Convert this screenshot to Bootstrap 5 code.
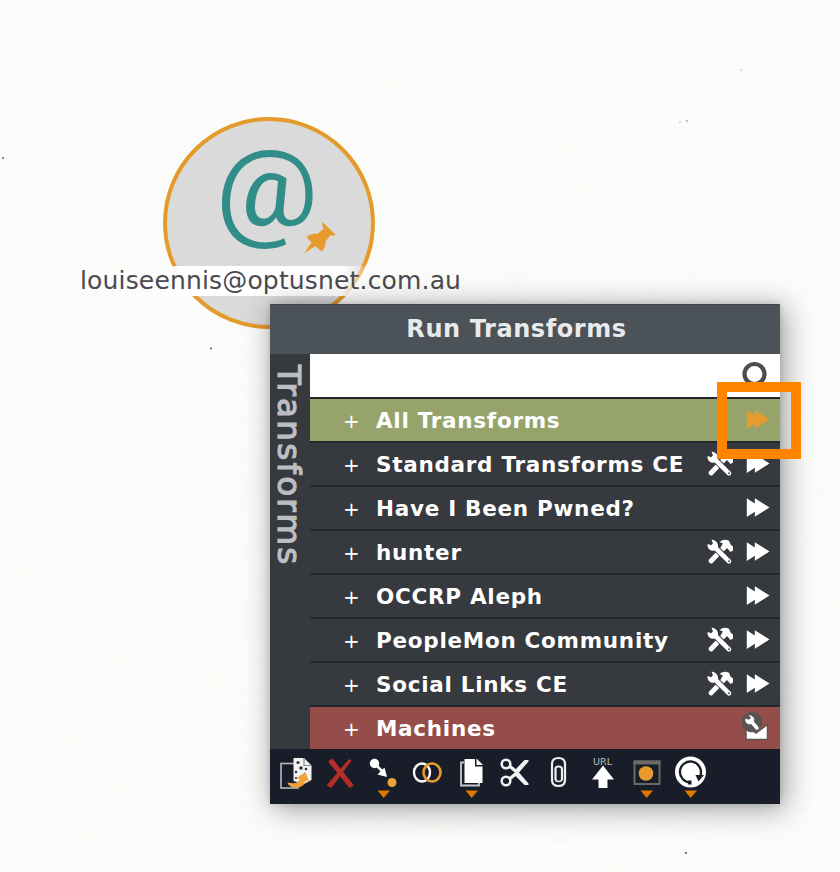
<!DOCTYPE html>
<html lang="en">
<head>
<meta charset="utf-8">
<title>Run Transforms</title>
<link rel="stylesheet" href="https://cdn.jsdelivr.net/npm/bootstrap@5.3.0/dist/css/bootstrap.min.css">
<style>
body{width:840px;height:872px;background:#fcfcfa;font-family:"DejaVu Sans",sans-serif}
.graph{width:840px;height:872px}
.specks{inset:0;width:840px;height:872px}
.node{left:163px;top:117px;width:212px;height:212px;border:4px solid #e59a2c;background:#dadada}
.glyph{left:163px;top:117px;width:212px;height:212px;overflow:visible}
.node-label{left:77px;top:266px;width:388px;height:30px;line-height:30px;padding-left:3px;font-size:25px;letter-spacing:.16px;color:#4a4a50;background:linear-gradient(90deg,transparent 80px,#fff 100px,#fff 265px,transparent 295px)}
.menu{left:270px;top:304px;width:510px;height:500px;background:#36393e;box-shadow:4px 4px 28px 1px rgba(0,0,0,.38),0 0 7px rgba(0,0,0,.14)}
.menu-title{height:50px;background:#4b5258;color:#e9eaec;font-size:24px;letter-spacing:.58px;border-top:1px solid #3e444a;padding-right:17px;padding-bottom:2px}
.side{width:40px}
.side-text{writing-mode:vertical-rl;font-size:32.5px;line-height:37px;letter-spacing:2.3px;color:#bbbec3;-webkit-text-stroke:1.2px #bbbec3;margin-top:11px}
.search{height:43px;background:#fff}
.entry{height:44px;border-top:2px solid #25272b;color:#fff;padding:0 10px 0 33px}
.entry .plus{width:33px;font-size:20px;line-height:1;padding-top:2px}
.entry .label{font-size:21.5px;font-weight:700;letter-spacing:.72px;line-height:44px;height:42px}
.all{background:#96a36a;color:#fff}
.machines{background:#954d4a}
.tools{height:55px;background:#181d29}
.focus-box{left:717px;top:382px;width:84px;height:77px;border:10px solid #ff8400}
svg{display:block}
</style>
<script src="https://cdn.jsdelivr.net/npm/bootstrap@5.3.0/dist/js/bootstrap.bundle.min.js"></script>
</head>
<body class="m-0 overflow-hidden">
<svg width="0" height="0" class="position-absolute">
 <defs>
  <symbol id="run" viewBox="0 0 24 20"><path d="M.8.3 8.800 5.500V.3L23.500 9.500 8.800 18.800V13.800L.8 19Z" fill="currentColor"/></symbol>
  <symbol id="gear" viewBox="0 0 26 26">
   <path d="M4 22 18 7.500" stroke="#fff" stroke-width="4.800" stroke-linecap="round"/>
   <path d="M12.500 3Q17-.6 22 1.800L23.500 5.500 26 7.500V11.500L23.500 13 19.500 8.500 17 10.500 14 7.500 16 4.500Z" fill="#fff"/>
   <path d="M7 7.500 22 22" stroke="#36393e" stroke-width="6.600"/>
   <path d="M6.500 7 22 22.300" stroke="#fff" stroke-width="4.600" stroke-linecap="round"/>
   <path d="M4.500.5 6 4.800 4.500 6.200.5 5Q0 9.500 4 11.500 8 12.500 10.500 9.500 12 6 9.500 3 7.500.8 4.500.5Z" fill="#fff"/>
   <circle cx="22" cy="22.300" r="1" fill="#555"/>
  </symbol>
 </defs>
</svg>
<main class="graph position-relative">
 <svg class="specks position-absolute" viewBox="0 0 840 872">
  <filter id="paper" x="0" y="0" width="100%" height="100%"><feTurbulence type="fractalNoise" baseFrequency=".03 .09" numOctaves="4" seed="4"/><feColorMatrix values="0 0 0 0 .5  0 0 0 0 .48  0 0 0 0 .42  .07 0 0 0 -.03"/></filter>
  <rect width="840" height="872" filter="url(#paper)"/>
  <g fill="#555"><circle cx="211" cy="348.500" r="1"/><circle cx="686" cy="853" r="1.100"/><circle cx="3" cy="158" r=".9"/><circle cx="687" cy="121" r=".7"/><circle cx="680" cy="122" r=".6"/><circle cx="741" cy="70" r=".5"/></g>
 </svg>
 <div class="node position-absolute rounded-circle"></div>
 <svg class="glyph position-absolute" viewBox="163 117 212 212">
  <text transform="translate(215.500 225) scale(1.070 1)" font-family="Roboto, sans-serif" font-size="107" fill="#308d87">@</text>
  <path d="M322.500 222 335.500 234.500Q333 236.500 330.500 235L325.500 241.500Q326 247 321.500 251.500L315.500 246 304 253.500 311.500 242.500 306.500 237Q311 233 317 234L323.500 229Q321.500 225 322.500 222Z" fill="#e79b2d"/>
 </svg>
 <div class="node-label position-absolute text-nowrap">louiseennis@optusnet.com.au</div>

 <section class="menu position-absolute d-flex flex-column">
  <header class="menu-title d-flex align-items-center justify-content-center fw-bold">Run Transforms</header>
  <div class="d-flex">
   <aside class="side"><div class="side-text">Transforms</div></aside>
   <div class="flex-grow-1">
    <div class="search d-flex justify-content-end pe-2"><svg width="36" height="43"><circle cx="18.500" cy="20" r="10" fill="none" stroke="#4d4d4d" stroke-width="4.200"/></svg></div>
    <div class="entry all d-flex align-items-center"><span class="plus">+</span><span class="label flex-grow-1">All Transforms</span><svg width="24" height="20" style="color:#e79b2d"><use href="#run"/></svg></div>
    <div class="entry d-flex align-items-center"><span class="plus">+</span><span class="label flex-grow-1 text-nowrap">Standard Transforms CE</span><svg class="me-2" width="27" height="26"><use href="#gear" width="26" height="26"/></svg><svg class="ms-1" width="24" height="20"><use href="#run"/></svg></div>
    <div class="entry d-flex align-items-center"><span class="plus">+</span><span class="label flex-grow-1">Have I Been Pwned?</span><svg width="24" height="20"><use href="#run"/></svg></div>
    <div class="entry d-flex align-items-center"><span class="plus">+</span><span class="label flex-grow-1">hunter</span><svg class="me-2" width="27" height="26"><use href="#gear" width="26" height="26"/></svg><svg class="ms-1" width="24" height="20"><use href="#run"/></svg></div>
    <div class="entry d-flex align-items-center"><span class="plus">+</span><span class="label flex-grow-1">OCCRP Aleph</span><svg width="24" height="20"><use href="#run"/></svg></div>
    <div class="entry d-flex align-items-center"><span class="plus">+</span><span class="label flex-grow-1 text-nowrap">PeopleMon Community</span><svg class="me-2" width="27" height="26"><use href="#gear" width="26" height="26"/></svg><svg class="ms-1" width="24" height="20"><use href="#run"/></svg></div>
    <div class="entry d-flex align-items-center"><span class="plus">+</span><span class="label flex-grow-1">Social Links CE</span><svg class="me-2" width="27" height="26"><use href="#gear" width="26" height="26"/></svg><svg class="ms-1" width="24" height="20"><use href="#run"/></svg></div>
    <div class="entry machines d-flex align-items-center"><span class="plus">+</span><span class="label flex-grow-1">Machines</span>
     <svg width="30" height="42" viewBox="740 707 30 42"><path d="M746 725.500 756 733 767.500 724.500V739.500H746Z" fill="#fff" stroke="#5b5652" stroke-width="1.500"/><circle cx="752" cy="722" r="10.300" fill="#555"/><path d="M750.500 720.500 757 728" stroke="#fff" stroke-width="3.600" stroke-linecap="round"/><path d="M748.500 715 751 718 749.500 720 745.500 718.500Q744.500 722 748 724 752 725 754 721.500 755.500 716 748.500 715Z" fill="#fff"/></svg></div>
   </div>
  </div>
  <footer class="tools">
   <svg width="510" height="55" viewBox="270 749 510 55" fill="none">
    <!-- copy to new graph -->
    <rect x="281" y="763.500" width="17" height="24.500" stroke="#aeb0b5" stroke-width="1.700"/>
    <path d="M293.500 758H304L311.500 765.500V780L304 784 293.500 781Z" fill="#f3f3f3"/>
    <path d="M304 758V765.500H311.500" stroke="#888" stroke-width="1.200"/>
    <g fill="#333"><circle cx="298" cy="762.500" r="1.600"/><circle cx="301" cy="768" r="1.800"/><circle cx="296" cy="772" r="1.300"/><circle cx="306" cy="769" r="1.300"/><circle cx="296" cy="778" r="1.100"/></g>
    <path d="M287.500 782.500Q298 785 299.500 779L296.500 778 305.500 772 309 781.500 306 780.500Q303 789 293.500 787.500 288 786 287.500 782.500Z" fill="#f0a33a"/>
    <!-- delete -->
    <path d="M328 761.500 332.500 758.500 354 785.500 349.500 788Z" fill="#b32d29"/><path d="M349 759 351.500 760.500 331.500 788 326.500 785.500Z" fill="#b32d29"/>
    <!-- link -->
    <circle cx="374.500" cy="763.500" r="4.700" fill="#fff"/><path d="M376 765 382 771" stroke="#fff" stroke-width="2.500"/><path d="M387 777 377.500 774.500 384.500 767.500Z" fill="#fff"/><circle cx="392" cy="782.500" r="4.500" fill="#eda13a"/>
    <!-- merge -->
    <ellipse cx="422" cy="772.500" rx="8" ry="9" stroke="#fff" stroke-width="2.400"/><ellipse cx="432" cy="772.500" rx="8.500" ry="9" stroke="#e79b2d" stroke-width="2.600"/>
    <!-- copy -->
    <path d="M464 762.500H461V785.500H479V783" stroke="#c8cacd" stroke-width="1.800"/><path d="M464.500 759H475V766.500H482.500V783H464.500Z" fill="#fff"/><path d="M476.500 758.500 483 765H476.500Z" fill="#fff"/>
    <!-- cut -->
    <g stroke="#f3f3f3"><circle cx="506" cy="764" r="4.300" stroke-width="2.500"/><circle cx="506" cy="781" r="4.300" stroke-width="2.500"/><path d="M510 766.500 518 773M510 778.500 518 772" stroke-width="3.400"/></g><path d="M515 770 524.500 760H528.500V761.500L519 772.500 528.500 783.500V785H524.500L515 775.500Z" fill="#f3f3f3"/>
    <!-- attach -->
    <path d="M562 780V769Q562 766.500 558.500 766.500 555.500 766.500 555.500 769V780M552 770V780Q552 786 558.500 786 565 786 565 780V764Q565 758 558.500 758 552 758 552 764V771" stroke="#eee" stroke-width="2.200"/><path d="M555.500 779Q555.500 781.500 558.500 781.500 562 781.500 562 779" stroke="#eee" stroke-width="1.600"/>
    <!-- open link -->
    <text x="593" y="764.500" font-size="8" textLength="19" lengthAdjust="spacingAndGlyphs" font-family="DejaVu Sans, sans-serif" fill="#bfc1c5">URL</text><path d="M603 765.500 614 779.500H607.500V788H598.500V779.500H592Z" fill="#fff"/>
    <!-- bookmark -->
    <rect x="634.500" y="761.500" width="25" height="22.500" stroke="#6b6963" stroke-width="2"/><path d="M633.500 762.500H660.500" stroke="#6b6963" stroke-width="4"/><circle cx="646" cy="773.500" r="7.300" fill="#e79b2d"/>
    <!-- refresh -->
    <circle cx="690.500" cy="772" r="15.500" fill="#fff"/><path d="M690.500 782.500A10.500 10.500 0 1 1 700.500 775" stroke="#181d29" stroke-width="2.300"/><path d="M695.500 775H704L698.500 781.500Z" fill="#181d29"/><path d="M687.500 780.500H691.500V784.500H688Z" fill="#181d29"/>
    <g fill="#df7800"><path d="M377.500 790.500H390L383.700 798Z"/><path d="M465.500 790.500H478L471.700 798Z"/><path d="M640.500 790.500H653L646.700 798Z"/><path d="M684.500 790.500H697L690.700 798Z"/></g>
   </svg>
  </footer>
 </section>
 <div class="focus-box position-absolute"></div>
</main>
</body>
</html>
